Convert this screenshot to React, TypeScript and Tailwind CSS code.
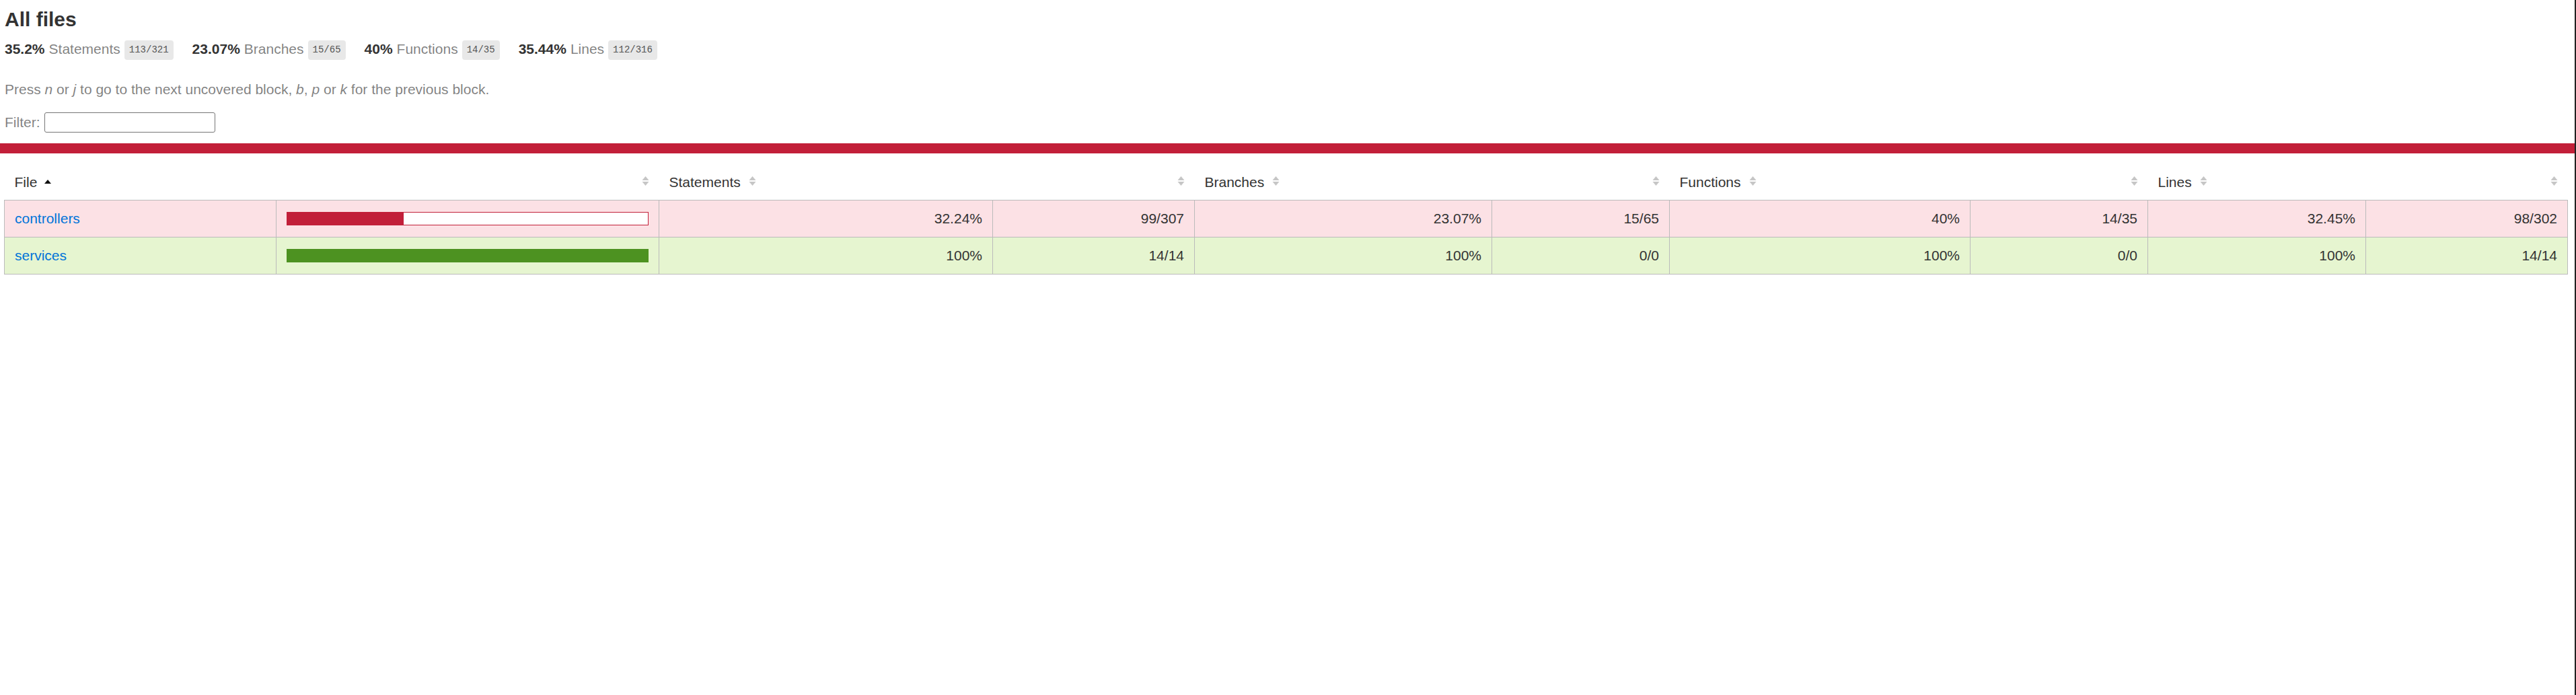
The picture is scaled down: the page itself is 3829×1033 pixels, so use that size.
import React from 'react'

type Row = {
  name: string
  level: 'low' | 'high'
  pct: number
  cells: string[]
}

const rows: Row[] = [
  {
    name: 'controllers',
    level: 'low',
    pct: 32.24,
    cells: ['32.24%', '99/307', '23.07%', '15/65', '40%', '14/35', '32.45%', '98/302'],
  },
  {
    name: 'services',
    level: 'high',
    pct: 100,
    cells: ['100%', '14/14', '100%', '0/0', '100%', '0/0', '100%', '14/14'],
  },
]

const stats = [
  { pct: '35.2%', label: 'Statements', frac: '113/321' },
  { pct: '23.07%', label: 'Branches', frac: '15/65' },
  { pct: '40%', label: 'Functions', frac: '14/35' },
  { pct: '35.44%', label: 'Lines', frac: '112/316' },
]

function Sorter({ className = '' }: { className?: string }) {
  return (
    <svg width="11" height="16" viewBox="0 0 11 16" className={'inline-block align-[1px] ' + className}>
      <polygon points="0.5,7 5.5,1 10.5,7" fill="#c6c6c6" />
      <polygon points="0.5,9 5.5,15 10.5,9" fill="#c6c6c6" />
    </svg>
  )
}

function SortedUp() {
  return (
    <svg width="10" height="6" viewBox="0 0 10 6" className="inline-block align-[5px] ml-[11px]">
      <polygon points="0,6 5,0 10,6" fill="#111" />
    </svg>
  )
}

function CoverBar({ row }: { row: Row }) {
  if (row.level === 'high') {
    return <div className="h-[20px] w-full bg-[#4d9221]" />
  }
  return (
    <div className="flex h-[20px] w-full">
      <div className="h-full bg-[#c21f39]" style={{ width: `${row.pct}%` }} />
      <div className="h-full flex-1 border border-[#c21f39] bg-white" />
    </div>
  )
}

export default function App() {
  return (
    <div className="flex min-h-screen w-full bg-white font-['Liberation_Sans',Arial,sans-serif] text-[21px] text-[#333]">
      <div className="flex flex-1 flex-col">
        <div className="px-[7px] pt-[12px]">
          <h1 className="text-[30px] font-bold leading-[34px]">All files</h1>

          <div className="mt-[14px] flex items-start">
            {stats.map((s) => (
              <div key={s.label} className="mr-[28px] flex items-start gap-[6px]">
                <span className="font-bold leading-[25px]">{s.pct}</span>
                <span className="leading-[25px] text-black/50">{s.label}</span>
                <span className="h-[29px] rounded-[4px] bg-[#e8e8e8] px-[7px] font-['Liberation_Mono',monospace] text-[14px] leading-[29px] text-[#555]">
                  {s.frac}
                </span>
              </div>
            ))}
          </div>

          <p className="mt-[31px] leading-[25px] text-black/50">
            Press <em>n</em> or <em>j</em> to go to the next uncovered block, <em>b</em>, <em>p</em> or{' '}
            <em>k</em> for the previous block.
          </p>

          <div className="mt-[22px] flex h-[30px] items-center">
            <label className="leading-[30px] text-black/50">Filter:</label>
            <input
              type="text"
              className="ml-[6px] h-[30px] w-[254px] rounded-[3px] border border-[#767676] bg-white px-1 text-[18px] outline-none"
            />
          </div>
        </div>

        <div className="mt-[16px] h-[15px] w-full bg-[#c21f39]" />

        <div className="mt-[16px] pl-[6px]">
          <table className="w-[3810px] table-fixed border-collapse">
            <colgroup>
              <col className="w-[404px]" />
              <col className="w-[569px]" />
              <col className="w-[496px]" />
              <col className="w-[300px]" />
              <col className="w-[442px]" />
              <col className="w-[264px]" />
              <col className="w-[447px]" />
              <col className="w-[264px]" />
              <col className="w-[324px]" />
              <col className="w-[300px]" />
            </colgroup>
            <thead>
              <tr>
                <th className="whitespace-nowrap px-[15px] pb-[14px] pt-[15px] text-left font-normal leading-[24px]">
                  File
                  <SortedUp />
                </th>
                <th className="px-[15px] pb-[14px] pt-[15px] text-right font-normal leading-[24px]">
                  <Sorter />
                </th>
                {['Statements', 'Branches', 'Functions', 'Lines'].map((h) => (
                  <React.Fragment key={h}>
                    <th className="whitespace-nowrap px-[15px] pb-[14px] pt-[15px] text-left font-normal leading-[24px]">
                      {h}
                      <Sorter className="ml-[12px]" />
                    </th>
                    <th className="px-[15px] pb-[14px] pt-[15px] text-right font-normal leading-[24px]">
                      <Sorter />
                    </th>
                  </React.Fragment>
                ))}
              </tr>
            </thead>
            <tbody className="border border-[#bbb]">
              {rows.map((r) => (
                <tr
                  key={r.name}
                  className={'border-b border-[#bbb] ' + (r.level === 'low' ? 'bg-[#fce1e5]' : 'bg-[#e6f5d0]')}
                >
                  <td className="whitespace-nowrap border-r border-[#bbb] px-[15px] py-[15px] leading-[24px]">
                    <a href="#" className="text-[#0074d9]">
                      {r.name}
                    </a>
                  </td>
                  <td className="border-r border-[#bbb] px-[15px] py-[15px] leading-[24px]">
                    <CoverBar row={r} />
                  </td>
                  {r.cells.map((c, i) => (
                    <td key={i} className="border-r border-[#bbb] px-[15px] py-[15px] text-right leading-[24px]">
                      {c}
                    </td>
                  ))}
                </tr>
              ))}
            </tbody>
          </table>
        </div>
      </div>
      <div className="w-[2px] shrink-0 bg-[#222]" />
    </div>
  )
}
